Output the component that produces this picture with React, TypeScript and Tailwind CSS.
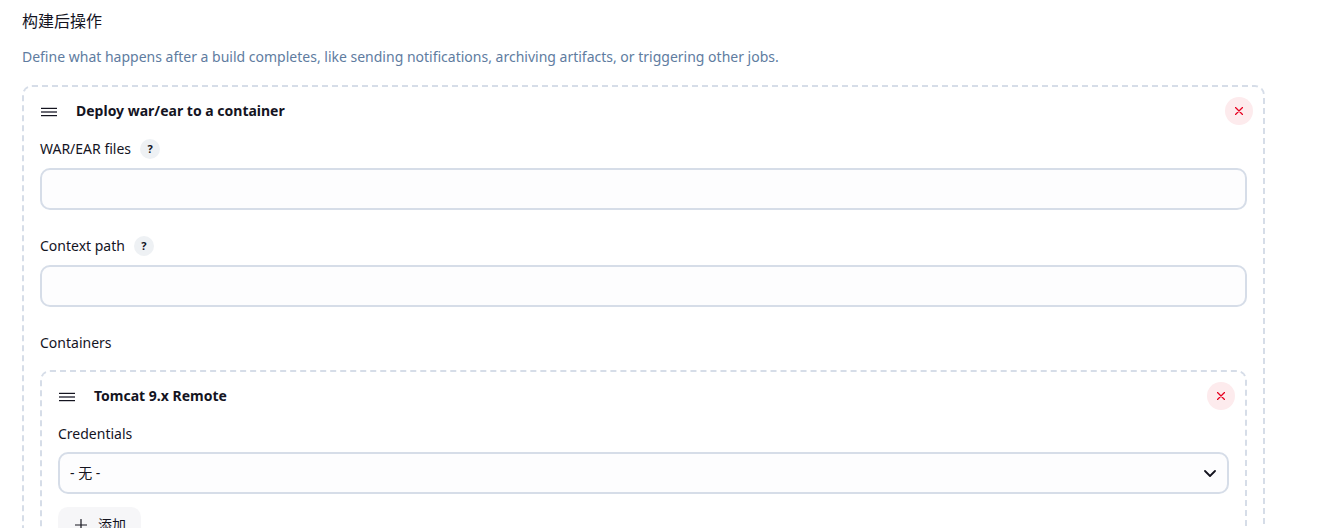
import type { ReactNode } from "react";

function HandleIcon() {
  return (
    <svg className="h-4 w-4" viewBox="0 0 16 16" shapeRendering="crispEdges" aria-hidden="true">
      <path d="M0 4h16v1H0zM0 13h16v1H0z" fill="#14141f" opacity=".22" />
      <path d="M0 5h16v1H0zM0 12h16v1H0z" fill="#14141f" />
      <path d="M0 8h16v2H0z" fill="#6b6b74" />
    </svg>
  );
}

function CloseIcon() {
  return (
    <svg className="h-2 w-2" viewBox="0 0 8 8" fill="none" stroke="#e6001f" strokeWidth="1.3" strokeLinecap="round" aria-hidden="true">
      <path d="M.5.5l7 7M7.5.5l-7 7" />
    </svg>
  );
}

function RepeatedChunk({ title, children }: { title: string; children: ReactNode }) {
  return (
    <section className="rounded-[10px] border-2 border-dashed border-[#d6dde8] px-4 pb-4">
      <header className="-mr-1.5 flex h-12 items-center">
        <button type="button" aria-label="Drag to reorder" className="mr-[19px] ml-px cursor-move">
          <HandleIcon />
        </button>
        <h3 className="flex-1 text-sm font-bold">{title}</h3>
        <button type="button" aria-label={`Delete ${title}`} className="flex h-7 w-7 items-center justify-center rounded-full bg-[#fdebed]">
          <CloseIcon />
        </button>
      </header>
      {children}
    </section>
  );
}

function TextField({ id, label }: { id: string; label: string }) {
  return (
    <div className="mb-[22px]">
      <div className="flex h-7 items-center gap-[9px] text-sm">
        <label htmlFor={id}>{label}</label>
        <button
          type="button"
          aria-label={`Help for ${label}`}
          className="flex h-5 w-5 items-center justify-center rounded-full bg-[#eef1f4] text-[11px] font-bold"
        >
          ?
        </button>
      </div>
      <input
        id={id}
        type="text"
        className="mt-[5px] block h-[42px] w-full rounded-[10px] border-2 border-[#d6dde8] bg-[#fdfdfe] px-2.5 text-sm outline-none"
      />
    </div>
  );
}

export default function App() {
  return (
    <div className="h-screen overflow-hidden bg-white font-['Noto_Sans','Noto_Sans_CJK_SC',sans-serif] text-[#14141f]">
      <main className="pt-[9px] pr-[58px] pl-[22px]">
        <h2 className="text-base leading-6">构建后操作</h2>
        <p className="mt-3.5 mb-[18px] text-sm leading-5 text-[#607c9f]">
          Define what happens after a build completes, like sending notifications, archiving artifacts, or triggering other jobs.
        </p>
        <RepeatedChunk title="Deploy war/ear to a container">
          <TextField id="war-files" label="WAR/EAR files" />
          <TextField id="context-path" label="Context path" />
          <div className="mb-[13px] text-sm leading-7">Containers</div>
          <RepeatedChunk title="Tomcat 9.x Remote">
            <label htmlFor="credentials" className="block text-sm leading-7">
              Credentials
            </label>
            <div className="mt-1 grid items-center">
              <select
                id="credentials"
                className="col-start-1 row-start-1 h-[42px] w-full appearance-none rounded-[10px] border-2 border-[#d6dde8] bg-[#fdfdfe] px-2.5 text-sm outline-none"
              >
                <option>- 无 -</option>
              </select>
              <svg
                className="pointer-events-none col-start-1 row-start-1 mr-[13px] h-3 w-3 justify-self-end"
                viewBox="0 0 12 12"
                fill="none"
                stroke="#14141f"
                strokeWidth="1.8"
                strokeLinecap="round"
                strokeLinejoin="round"
                aria-hidden="true"
              >
                <path d="M1 4l5 5 5-5" />
              </svg>
            </div>
            <button type="button" className="mt-[13px] flex h-9 items-center gap-[11px] rounded-[10px] bg-[#f6f6f8] pr-[15px] pl-[17px] text-sm">
              <svg className="h-3 w-3" viewBox="0 0 12 12" stroke="#14141f" strokeWidth="1.2" strokeLinecap="round" aria-hidden="true">
                <path d="M6 .5v11M.5 6h11" />
              </svg>
              添加
            </button>
          </RepeatedChunk>
        </RepeatedChunk>
      </main>
    </div>
  );
}
